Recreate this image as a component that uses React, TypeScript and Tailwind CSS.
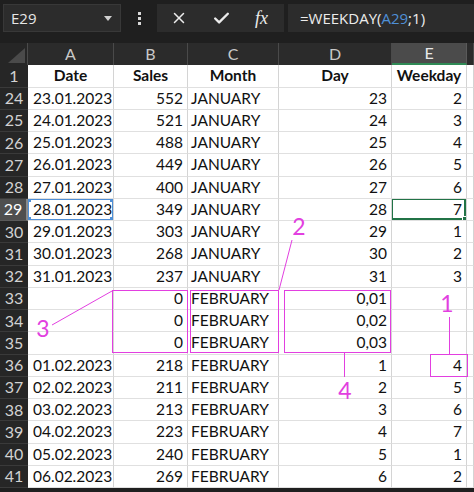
import React from 'react';
import { X, Check } from 'lucide-react';

type Row = { n: number; date: string; sales: string; month: string; day: string; wd: string };

const ROWS: Row[] = [
  { n: 24, date: '23.01.2023', sales: '552', month: 'JANUARY', day: '23', wd: '2' },
  { n: 25, date: '24.01.2023', sales: '521', month: 'JANUARY', day: '24', wd: '3' },
  { n: 26, date: '25.01.2023', sales: '488', month: 'JANUARY', day: '25', wd: '4' },
  { n: 27, date: '26.01.2023', sales: '449', month: 'JANUARY', day: '26', wd: '5' },
  { n: 28, date: '27.01.2023', sales: '400', month: 'JANUARY', day: '27', wd: '6' },
  { n: 29, date: '28.01.2023', sales: '349', month: 'JANUARY', day: '28', wd: '7' },
  { n: 30, date: '29.01.2023', sales: '303', month: 'JANUARY', day: '29', wd: '1' },
  { n: 31, date: '30.01.2023', sales: '268', month: 'JANUARY', day: '30', wd: '2' },
  { n: 32, date: '31.01.2023', sales: '237', month: 'JANUARY', day: '31', wd: '3' },
  { n: 33, date: '', sales: '0', month: 'FEBRUARY', day: '0,01', wd: '' },
  { n: 34, date: '', sales: '0', month: 'FEBRUARY', day: '0,02', wd: '' },
  { n: 35, date: '', sales: '0', month: 'FEBRUARY', day: '0,03', wd: '' },
  { n: 36, date: '01.02.2023', sales: '218', month: 'FEBRUARY', day: '1', wd: '4' },
  { n: 37, date: '02.02.2023', sales: '211', month: 'FEBRUARY', day: '2', wd: '5' },
  { n: 38, date: '03.02.2023', sales: '213', month: 'FEBRUARY', day: '3', wd: '6' },
  { n: 39, date: '04.02.2023', sales: '223', month: 'FEBRUARY', day: '4', wd: '7' },
  { n: 40, date: '05.02.2023', sales: '240', month: 'FEBRUARY', day: '5', wd: '1' },
  { n: 41, date: '06.02.2023', sales: '269', month: 'FEBRUARY', day: '6', wd: '2' },
];

const cell = 'bg-white border-r border-b border-r-[#d4d4d4] border-b-[#e0e0e0] flex items-center text-[#111] whitespace-nowrap overflow-hidden';
const colHead = 'bg-[#2b2b2b] border-r border-[#4a4a4a] flex items-center justify-center text-[#c8c8c8] text-[16px]';
const rowHead = 'bg-[#262626] border-b border-[#3a3a3a] flex items-center justify-center text-[#d2d2d2] text-[16px]';

function Handle({ className }: { className: string }) {
  return <span className={`absolute w-[5px] h-[5px] bg-[#4f8fd6] ${className}`} />;
}

function Annotations() {
  const c = '#e23fe0';
  return (
    <svg className="absolute inset-0 pointer-events-none" width="474" height="492">
      <g fill="none" stroke={c} strokeWidth="1">
        <rect x="112.5" y="290.5" width="75" height="62" />
        <rect x="190.5" y="290.5" width="88" height="62" />
        <rect x="284.5" y="290.5" width="106" height="62" />
        <rect x="430.5" y="354.5" width="37" height="22" />
        <line x1="52" y1="325" x2="112" y2="291" />
        <line x1="292" y1="240" x2="279" y2="290" />
        <line x1="449.5" y1="317" x2="449.5" y2="354" />
        <line x1="344.5" y1="352" x2="344.5" y2="377" />
      </g>
      <g fill={c} fontFamily="Lato, sans-serif" fontSize="23" textAnchor="middle">
        <text x="43" y="337">3</text>
        <text x="299" y="235">2</text>
        <text x="447" y="312">1</text>
        <text x="345" y="399">4</text>
      </g>
    </svg>
  );
}

export default function App() {
  return (
    <div className="relative w-[474px] h-[492px] overflow-hidden bg-[#1f1f1f] font-['Lato',sans-serif] text-[15.5px]">
      {/* formula bar */}
      <div className="flex items-center h-[36px] pl-[3px]">
        <div className="flex items-center justify-between w-[118px] h-[28px] bg-[#2c2c2c] border border-[#383838] pl-[7px] pr-[8px] font-['Open_Sans',sans-serif] text-[15px] text-[#e6e6e6]">
          <span>E29</span>
          <svg width="8" height="5" viewBox="0 0 8 5"><path d="M0 0h8L4 5z" fill="#d0d0d0" /></svg>
        </div>
        <div className="w-[36px] flex flex-col items-center gap-[2px]">
          <span className="w-[3px] h-[3px] bg-[#d8d8d8]" />
          <span className="w-[3px] h-[3px] bg-[#d8d8d8]" />
          <span className="w-[3px] h-[3px] bg-[#d8d8d8]" />
        </div>
        <div className="flex items-center w-[127px] h-[28px] bg-[#2c2c2c] text-[#ececec]">
          <X className="w-[18px] h-[18px] ml-[13px]" strokeWidth={2} />
          <Check className="w-[19px] h-[19px] ml-[24px]" strokeWidth={3} />
          <span className="ml-[24px] font-['Liberation_Serif',serif] italic text-[18px]">fx</span>
        </div>
        <div className="flex items-center flex-1 h-[28px] ml-[4px] bg-[#2c2c2c] pl-[12px] font-['Open_Sans',sans-serif] text-[15px] text-[#ececec]">
          =WEEKDAY(<span className="text-[#4f8fd6]">A29</span>;1)
        </div>
      </div>
      <div className="h-[7px]" />

      {/* sheet */}
      <div className="grid grid-cols-[28px_86px_74px_91px_113px_75px_1fr] auto-rows-[22.25px]">
        <div className="bg-[#262626] border-r border-[#4a4a4a] flex items-end justify-end pr-[2px] pb-[2px]">
          <svg width="17" height="15" viewBox="0 0 17 15"><path d="M0 15L17 0v15z" fill="#4a4a4a" /></svg>
        </div>
        <div className={colHead}>A</div>
        <div className={colHead}>B</div>
        <div className={colHead}>C</div>
        <div className={colHead}>D</div>
        <div className="bg-[#4b4b4b] border-r border-[#5a5a5a] border-b-2 border-b-[#2f8a55] flex items-center justify-center text-[#e8e8e8] text-[16px]">E</div>
        <div className={colHead} />

        <div className={rowHead}>1</div>
        <div className={`${cell} justify-center font-bold`}>Date</div>
        <div className={`${cell} justify-center font-bold`}>Sales</div>
        <div className={`${cell} justify-center font-bold`}>Month</div>
        <div className={`${cell} justify-center font-bold`}>Day</div>
        <div className={`${cell} justify-center font-bold`}>Weekday</div>
        <div className={cell} />

        {ROWS.map((r) => {
          const sel = r.n === 29;
          return (
            <React.Fragment key={r.n}>
              <div className={sel ? 'bg-[#4f4f4f] border-b border-[#5a5a5a] border-r-2 border-r-[#8a8a8a] flex items-center justify-center text-white text-[16px]' : rowHead}>
                {r.n}
              </div>
              <div className={`${cell} pl-[5px] relative`}>
                {r.date}
                {sel && (
                  <span className="absolute inset-0 border border-[#4f8fd6]">
                    <Handle className="-left-[3px] -top-[3px]" />
                    <Handle className="-right-[3px] -top-[3px]" />
                    <Handle className="-left-[3px] -bottom-[3px]" />
                    <Handle className="-right-[3px] -bottom-[3px]" />
                  </span>
                )}
              </div>
              <div className={`${cell} justify-end pr-[4px]`}>{r.sales}</div>
              <div className={`${cell} pl-[3px]`}>{r.month}</div>
              <div className={`${cell} justify-end pr-[4px]`}>{r.day}</div>
              <div className={`${cell} justify-end pr-[4px] relative`}>
                {r.wd}
                {sel && (
                  <span className="absolute -left-[1px] -top-[1px] right-0 bottom-0 border-2 border-[#217346]">
                    <span className="absolute -right-[4px] -bottom-[4px] w-[6px] h-[6px] bg-[#217346] border border-white" />
                  </span>
                )}
              </div>
              <div className={cell} />
            </React.Fragment>
          );
        })}
      </div>

      <Annotations />
    </div>
  );
}
